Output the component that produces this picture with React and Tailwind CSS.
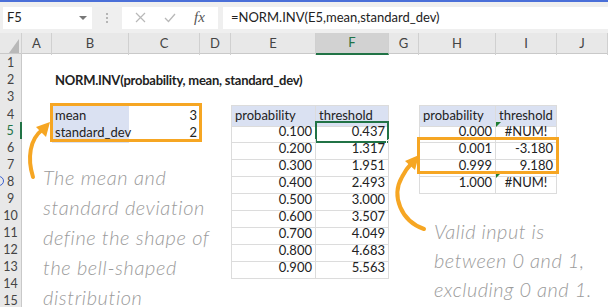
import React from 'react';

const cols = [22, 30, 77, 71, 31, 85, 73, 30, 77, 61, 51];
const letters = ['A', 'B', 'C', 'D', 'E', 'F', 'G', 'H', 'I', 'J'];

const probs = ['0.100', '0.200', '0.300', '0.400', '0.500', '0.600', '0.700', '0.800', '0.900'];
const thresholds = ['0.437', '1.317', '1.951', '2.493', '3.000', '3.507', '4.049', '4.683', '5.563'];
const edgeProbs = ['0.000', '0.001', '0.999', '1.000'];
const edgeThresholds = ['#NUM!', '-3.180', '9.180', '#NUM!'];

const grid = 'grid grid-cols-[22px_30px_77px_71px_31px_85px_73px_30px_77px_61px_51px]';
const tableLine = 'border-r border-b border-[#dcdcdc]';
const headBlue = 'bg-[#dae1f2]';

// content of each cell, keyed by "row,col"
const cells = {};
cells['2,2'] = { text: 'NORM.INV(probability, mean, standard_dev)', cls: 'font-bold tracking-[-0.25px] overflow-visible' };
cells['4,2'] = { text: 'mean', cls: headBlue };
cells['4,3'] = { text: '3', cls: 'justify-end' };
cells['5,2'] = { text: 'standard_dev', cls: headBlue };
cells['5,3'] = { text: '2', cls: 'justify-end' };
cells['4,5'] = { text: 'probability', cls: `${headBlue} ${tableLine} border-t border-l` };
cells['4,6'] = { text: 'threshold', cls: `${headBlue} ${tableLine} border-t` };
probs.forEach((p, i) => {
  cells[`${5 + i},5`] = { text: p, cls: `justify-end ${tableLine} border-l` };
  cells[`${5 + i},6`] = { text: thresholds[i], cls: `justify-end ${tableLine}` };
});
cells['4,8'] = { text: 'probability', cls: `${headBlue} ${tableLine} border-t border-l` };
cells['4,9'] = { text: 'threshold', cls: `${headBlue} ${tableLine} border-t` };
edgeProbs.forEach((p, i) => {
  cells[`${5 + i},8`] = { text: p, cls: `justify-end ${tableLine} border-l` };
  cells[`${5 + i},9`] = {
    text: edgeThresholds[i],
    cls: `${edgeThresholds[i].startsWith('#') ? 'justify-center' : 'justify-end'} ${tableLine}`,
    flag: edgeThresholds[i].startsWith('#'),
  };
});

const FormulaBar = () => (
  <div className="h-[33px] bg-[#efefef] border-t-2 border-[#4a6fd8] flex items-center gap-0 pl-[3px] pr-0">
    <div className="w-[89px] h-[22px] bg-white flex items-center justify-between pl-[4px] pr-[5px] text-[13px] text-[#222]">
      <span>F5</span>
      <span className="w-0 h-0 border-l-[4px] border-r-[4px] border-t-[4px] border-l-transparent border-r-transparent border-t-[#777]" />
    </div>
    <div className="w-[30px] flex flex-col items-center gap-[2px]">
      <span className="w-[2px] h-[2px] bg-[#b5b5b5]" />
      <span className="w-[2px] h-[2px] bg-[#b5b5b5]" />
      <span className="w-[2px] h-[2px] bg-[#b5b5b5]" />
    </div>
    <div className="w-[96px] h-[22px] bg-white flex items-center justify-around px-[4px] text-[#bdbdbd]">
      <svg width="11" height="11" viewBox="0 0 11 11" stroke="#b8b8b8" strokeWidth="1.2" fill="none">
        <path d="M1 1 L10 10 M10 1 L1 10" />
      </svg>
      <svg width="12" height="10" viewBox="0 0 12 10" stroke="#b8b8b8" strokeWidth="1.3" fill="none">
        <path d="M1 5 L4.5 8.5 L11 1" />
      </svg>
      <span className="text-[15px] italic text-[#555] font-['Liberation_Serif',serif]">fx</span>
    </div>
    <div className="ml-[5px] flex-1 h-[22px] bg-white flex items-center pl-[8px] text-[13px] text-[#222]">
      =NORM.INV(E5,mean,standard_dev)
    </div>
  </div>
);

const ColumnHeaders = () => (
  <div className={`${grid} h-[21px] bg-[#e8e8e8] border-b border-[#c9c9c9]`}>
    <div className="relative border-r border-[#d0d0d0]">
      <svg className="absolute right-[2px] bottom-[2px]" width="10" height="14" viewBox="0 0 10 14">
        <path d="M10 0 L10 14 L0 14 Z" fill="#b8b8b8" />
      </svg>
    </div>
    {letters.map((l) => (
      <div
        key={l}
        className={`flex items-center justify-center text-[13px] border-r border-[#d0d0d0] ${
          l === 'F' ? 'bg-[#d2d2d2] text-[#217346] border-b-2 border-b-[#217346]' : 'text-[#444]'
        }`}
      >
        {l}
      </div>
    ))}
  </div>
);

const Row = ({ r }) => (
  <div className={`${grid} h-[17px]`}>
    <div
      className={`relative flex items-center justify-center text-[12.5px] bg-[#e8e8e8] border-b border-[#d0d0d0] ${
        r === 5 ? 'bg-[#d6d6d6] text-[#217346] border-r-2 border-r-[#217346]' : 'text-[#444] border-r border-r-[#c9c9c9]'
      }`}
    >
      {r === 8 && (
        <span className="absolute left-[-6px] top-[3px] w-[10px] h-[10px] rounded-full border-[1.5px] border-[#3a5fd0]" />
      )}
      {r}
    </div>
    {cols.slice(1).map((_, i) => {
      const c = i + 1;
      const cell = cells[`${r},${c}`];
      if (!cell) return <div key={c} />;
      const selected = r === 5 && c === 6;
      return (
        <div
          key={c}
          className={`relative flex items-center px-[3px] text-[13px] text-[#222] whitespace-nowrap ${cell.cls}`}
        >
          {cell.flag && (
            <span className="absolute left-0 top-0 w-0 h-0 border-t-[5px] border-r-[5px] border-t-[#1e7d32] border-r-transparent" />
          )}
          {selected && (
            <span className="absolute -left-[1px] -top-[1px] -right-[1px] -bottom-[1px] border-2 border-[#217346]">
              <span className="absolute -right-[3px] -bottom-[3px] w-[4px] h-[4px] bg-[#217346] border border-white" />
            </span>
          )}
          <span className="relative">{cell.text}</span>
        </div>
      );
    })}
  </div>
);

const Notes = () => (
  <>
    <div className="absolute left-[50px] top-[103px] w-[152px] h-[39px] border-[3px] border-[#f6a623]" />
    <div className="absolute left-[417px] top-[137px] w-[142px] h-[37px] border-[3px] border-[#f6a623]" />
    <svg className="absolute left-0 top-0" width="608" height="307" viewBox="0 0 608 307" fill="none">
      <path d="M33 177 C 27 158, 30 139, 42 130" stroke="#f6a623" strokeWidth="4" strokeLinecap="round" />
      <path d="M50 122 L36 127 L46 137 Z" fill="#f6a623" />
      <path d="M424 229 C 401 221, 391 196, 402 177 C 405 171, 408 167, 411 164" stroke="#f6a623" strokeWidth="4" strokeLinecap="round" />
      <path d="M419 155 L405 161 L415 170 Z" fill="#f6a623" />
    </svg>
    <div className="absolute left-[43px] top-[162px] text-[20px] leading-[30px] italic font-light text-[#9b9b9b] font-['Lato',sans-serif] tracking-[0.6px]">
      <div>The mean and</div>
      <div>standard deviation</div>
      <div>define the shape of</div>
      <div>the bell-shaped</div>
      <div>distribution</div>
    </div>
    <div className="absolute left-[434px] top-[217px] text-[20px] leading-[29px] italic font-light text-[#9b9b9b] font-['Lato',sans-serif] tracking-[0.5px]">
      <div>Valid input is</div>
      <div>between 0 and 1,</div>
      <div>excluding 0 and 1.</div>
    </div>
  </>
);

export default function App() {
  return (
    <div className="relative w-[608px] h-[307px] overflow-hidden bg-white font-['Lato','Open_Sans',sans-serif]">
      <FormulaBar />
      <ColumnHeaders />
      {Array.from({ length: 15 }, (_, i) => (
        <Row key={i} r={i + 1} />
      ))}
      <Notes />
    </div>
  );
}
